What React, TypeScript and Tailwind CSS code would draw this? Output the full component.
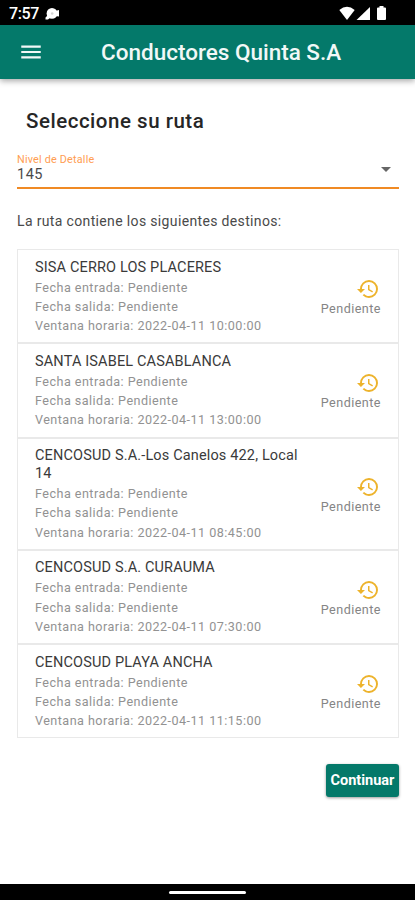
import { MdArrowDropDown, MdHistory, MdMenu } from "react-icons/md";

type Stop = {
  name: string;
  window: string;
};

const stops: Stop[] = [
  { name: "SISA CERRO LOS PLACERES", window: "2022-04-11 10:00:00" },
  { name: "SANTA ISABEL CASABLANCA", window: "2022-04-11 13:00:00" },
  { name: "CENCOSUD S.A.-Los Canelos 422, Local 14", window: "2022-04-11 08:45:00" },
  { name: "CENCOSUD S.A. CURAUMA", window: "2022-04-11 07:30:00" },
  { name: "CENCOSUD PLAYA ANCHA", window: "2022-04-11 11:15:00" }
];

function StatusBar() {
  return (
    <div className="flex h-[25px] items-center bg-black pt-[3px] pl-[9px] pr-[28px] text-white">
      <span className="text-[16px] font-medium leading-none tracking-[-0.4px]">7:57</span>
      <svg className="ml-[6px] -mt-px h-3 w-[15px]" viewBox="0 0 15 12" fill="currentColor">
        <circle cx="7" cy="5.4" r="5.4" />
        <path d="M3 7 L0.5 9.5 V11.5 H3 L5.5 9.5 Z M10 3 L14 2 V8.5 L10 8 Z" />
        <circle cx="7.2" cy="5.5" r="1.3" fill="#d4d4d4" />
      </svg>
      <svg className="ml-auto -mt-[2px] h-[15px] w-[48px]" viewBox="0 0 48 15" fill="currentColor">
        <path d="M0.3 4 Q8 -2.6 15.7 4 L8 14 Z" />
        <path d="M31 1 V14 H17.5 Z" />
        <path d="M40.5 0 H44.5 V1.5 H46 Q47 1.5 47 2.5 V13 Q47 14 46 14 H39 Q38 14 38 13 V2.5 Q38 1.5 39 1.5 H40.5 Z" />
      </svg>
    </div>
  );
}

function StopRow({ stop }: { stop: Stop }) {
  return (
    <li className="flex items-center border-b-2 border-[#e9e9e9] pt-[8.6px] pb-[6.8px] pl-[17px] pr-[17px] last:border-b">
      <div className="w-[272px]">
        <p className="mb-px text-[14.5px] leading-[18px] tracking-[0.15px] text-[#3a3a3a]">{stop.name}</p>
        <div className="text-[12.6px] leading-[19.3px] tracking-[0.46px] text-[#929292]">
          <p>Fecha entrada: Pendiente</p>
          <p>Fecha salida: Pendiente</p>
          <p>Ventana horaria: {stop.window}</p>
        </div>
      </div>
      <div className="ml-auto flex flex-col items-end">
        <MdHistory className="mr-px size-6 text-[#edb32c]" />
        <span className="text-[12.6px] leading-4 tracking-[0.46px] text-[#858585]">Pendiente</span>
      </div>
    </li>
  );
}

export default function App() {
  return (
    <div className="flex h-[900px] w-[415px] flex-col overflow-hidden bg-white font-['Roboto',sans-serif]">
      <StatusBar />
      <header className="flex h-[54px] shrink-0 items-center bg-[#04796a] pl-[18px] text-[#f1f8f7] shadow-[0_2px_6px_rgba(0,0,0,0.35)]">
        <MdMenu className="size-[26px]" />
        <h1 className="ml-[57px] whitespace-nowrap text-[22.5px] font-medium leading-none">
          Conductores Quinta S.A
        </h1>
      </header>

      <main className="flex flex-1 flex-col pl-[17px] pr-4">
        <h2 className="mt-[29px] ml-[9px] text-[20.5px] font-medium leading-[26px] tracking-[0.52px] text-[#262626]">
          Seleccione su ruta
        </h2>

        <div className="mt-[16px] flex h-[39px] items-center justify-between border-b-2 border-[#f08a24]">
          <div>
            <p className="text-[10.8px] leading-[13px] tracking-[0.2px] text-[#ff9d52]">Nivel de Detalle</p>
            <p className="text-[14.5px] leading-[18px] tracking-[0.5px] text-[#4a4a4a]">145</p>
          </div>
          <MdArrowDropDown className="mr-px size-[24px] text-[#666]" />
        </div>

        <p className="mt-[22px] text-[14px] leading-5 tracking-[0.35px] text-[#4a4a4a]">
          La ruta contiene los siguientes destinos:
        </p>

        <ul className="mt-[18px] border border-b-0 border-[#e9e9e9]">
          {stops.map((stop) => (
            <StopRow key={stop.name} stop={stop} />
          ))}
        </ul>

        <button className="mt-[26px] h-[33px] w-[73px] self-end rounded-[3px] bg-[#04796a] text-[14.5px] font-bold text-white shadow-[0_1px_3px_rgba(0,0,0,0.4)]">
          Continuar
        </button>
      </main>

      <footer className="flex h-4 shrink-0 items-center justify-center bg-black pt-px">
        <div className="h-[3px] w-[77px] rounded-full bg-white" />
      </footer>
    </div>
  );
}
